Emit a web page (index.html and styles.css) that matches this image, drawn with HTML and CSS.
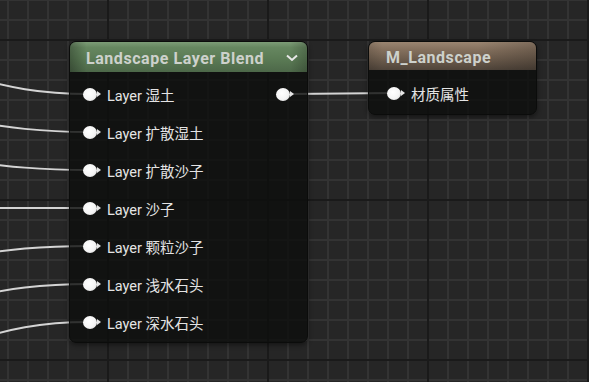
FILE: index.html
```html
<!DOCTYPE html>
<html lang="zh">
<head>
<meta charset="utf-8">
<title>Material Graph</title>
<link rel="stylesheet" href="styles.css">
</head>
<body>
<div class="graph">
  <svg class="wires" width="589" height="382" viewBox="0 0 589 382">
    <path d="M-40 74 C10 88 40 94 89 94"/>
    <path d="M-40 119 C10 128 40 132 89 132"/>
    <path d="M-40 160 C10 167 40 170 89 170"/>
    <path d="M-40 208 L89 208"/>
    <path d="M-40 257 C10 249.3 40 246 89 246"/>
    <path d="M-40 299 C10 288.5 40 284 89 284"/>
    <path d="M-40 344 C10 328.6 40 322 89 322"/>
    <path d="M290 94 L394 93"/>
  </svg>

  <div class="node node-blend">
    <div class="node-header header-green">
      <span class="title">Landscape Layer Blend</span>
      <svg class="chevron" width="12" height="8" viewBox="0 0 12 8"><path d="M1 1.5 L6 6 L11 1.5"/></svg>
    </div>
    <div class="node-body">
      <div class="pin-row"><span class="pin"></span><span class="label">Layer 湿土</span><span class="pin pin-out"></span></div>
      <div class="pin-row"><span class="pin"></span><span class="label">Layer 扩散湿土</span></div>
      <div class="pin-row"><span class="pin"></span><span class="label">Layer 扩散沙子</span></div>
      <div class="pin-row"><span class="pin"></span><span class="label">Layer 沙子</span></div>
      <div class="pin-row"><span class="pin"></span><span class="label">Layer 颗粒沙子</span></div>
      <div class="pin-row"><span class="pin"></span><span class="label">Layer 浅水石头</span></div>
      <div class="pin-row"><span class="pin"></span><span class="label">Layer 深水石头</span></div>
    </div>
  </div>

  <div class="node node-material">
    <div class="node-header header-brown">
      <span class="title">M_Landscape</span>
    </div>
    <div class="node-body">
      <div class="pin-row"><span class="pin"></span><span class="label">材质属性</span></div>
    </div>
  </div>
</div>
</body>
</html>
```

FILE: styles.css
```css
html, body {
  margin: 0;
  padding: 0;
  background: #262626;
}

.graph {
  position: relative;
  width: 589px;
  height: 382px;
  overflow: hidden;
  background-color: #262626;
  background-image:
    linear-gradient(to right, #1a1a1a 0, #1a1a1a 2px, transparent 2px),
    linear-gradient(to bottom, #1a1a1a 0, #1a1a1a 2px, transparent 2px),
    linear-gradient(to right, #333333 0, #333333 2px, transparent 2px),
    linear-gradient(to bottom, #333333 0, #333333 2px, transparent 2px);
  background-size: 160px 160px, 160px 160px, 20px 20px, 20px 20px;
  background-position: 107px 0, 0 39px, 7px 0, 0 19px;
  font-family: Roboto, "Noto Sans CJK SC", sans-serif;
}

.wires {
  position: absolute;
  left: 0;
  top: 0;
}

.wires path {
  fill: none;
  stroke: #d4d4d4;
  stroke-width: 2;
}

.node {
  position: absolute;
  box-sizing: border-box;
  border: 1px solid #0b0c0b;
  border-radius: 7px;
  overflow: hidden;
  background: rgba(14, 15, 13, 0.82);
  box-shadow: 0 2px 5px rgba(0, 0, 0, 0.45);
}

.node-blend {
  left: 69px;
  top: 41px;
  width: 239px;
  height: 302px;
}

.node-material {
  left: 368px;
  top: 41px;
  width: 169px;
  height: 74px;
}

.node-header {
  display: flex;
  align-items: center;
  box-sizing: border-box;
  padding-top: 2px;
}

.node-blend .node-header {
  height: 30px;
  padding-left: 16px;
  padding-right: 9px;
}

.node-material .node-header {
  height: 28px;
  padding-left: 17px;
}

.header-green {
  background:
    linear-gradient(to right, rgba(0, 0, 0, 0.28), rgba(0, 0, 0, 0) 7%, rgba(0, 0, 0, 0) 93%, rgba(0, 0, 0, 0.2)),
    linear-gradient(to bottom, #7c9c76 0, #668760 18%, #5b7b55 55%, #4d6849 100%);
}

.header-brown {
  background:
    linear-gradient(to right, rgba(0, 0, 0, 0.12), rgba(0, 0, 0, 0) 8%, rgba(0, 0, 0, 0) 65%, rgba(0, 0, 0, 0.18)),
    linear-gradient(to bottom, #9a8571 0, #86725f 25%, #6a5a4b 65%, #4f443a 100%);
}

.title {
  font-weight: 700;
  font-size: 16px;
  letter-spacing: 0.55px;
  color: #cdd1cc;
  white-space: nowrap;
}

.chevron {
  margin-left: auto;
}

.chevron path {
  fill: none;
  stroke: #e8e8e8;
  stroke-width: 2;
}

.node-blend .node-body {
  padding: 3px 0 2px;
}

.node-material .node-body {
  padding: 4px 0 3px;
}

.pin-row {
  display: flex;
  align-items: center;
  height: 38px;
}

.node-blend .pin-row {
  padding-left: 13px;
}

.node-material .pin-row {
  padding-left: 18px;
}

.pin {
  position: relative;
  flex: none;
  width: 14px;
  height: 13px;
  border-radius: 50%;
  background: radial-gradient(circle at 42% 40%, #ffffff 0, #f4f4f4 55%, #cfcfcf 100%);
}

.pin::after {
  content: "";
  position: absolute;
  right: -4px;
  top: 3.5px;
  width: 0;
  height: 0;
  border-top: 3px solid transparent;
  border-bottom: 3px solid transparent;
  border-left: 4px solid #e6e6e6;
}

.pin-out {
  margin-left: auto;
  margin-right: 17px;
}

.label {
  margin-left: 10px;
  font-size: 14.5px;
  color: #e4e4e4;
  white-space: nowrap;
}
```
